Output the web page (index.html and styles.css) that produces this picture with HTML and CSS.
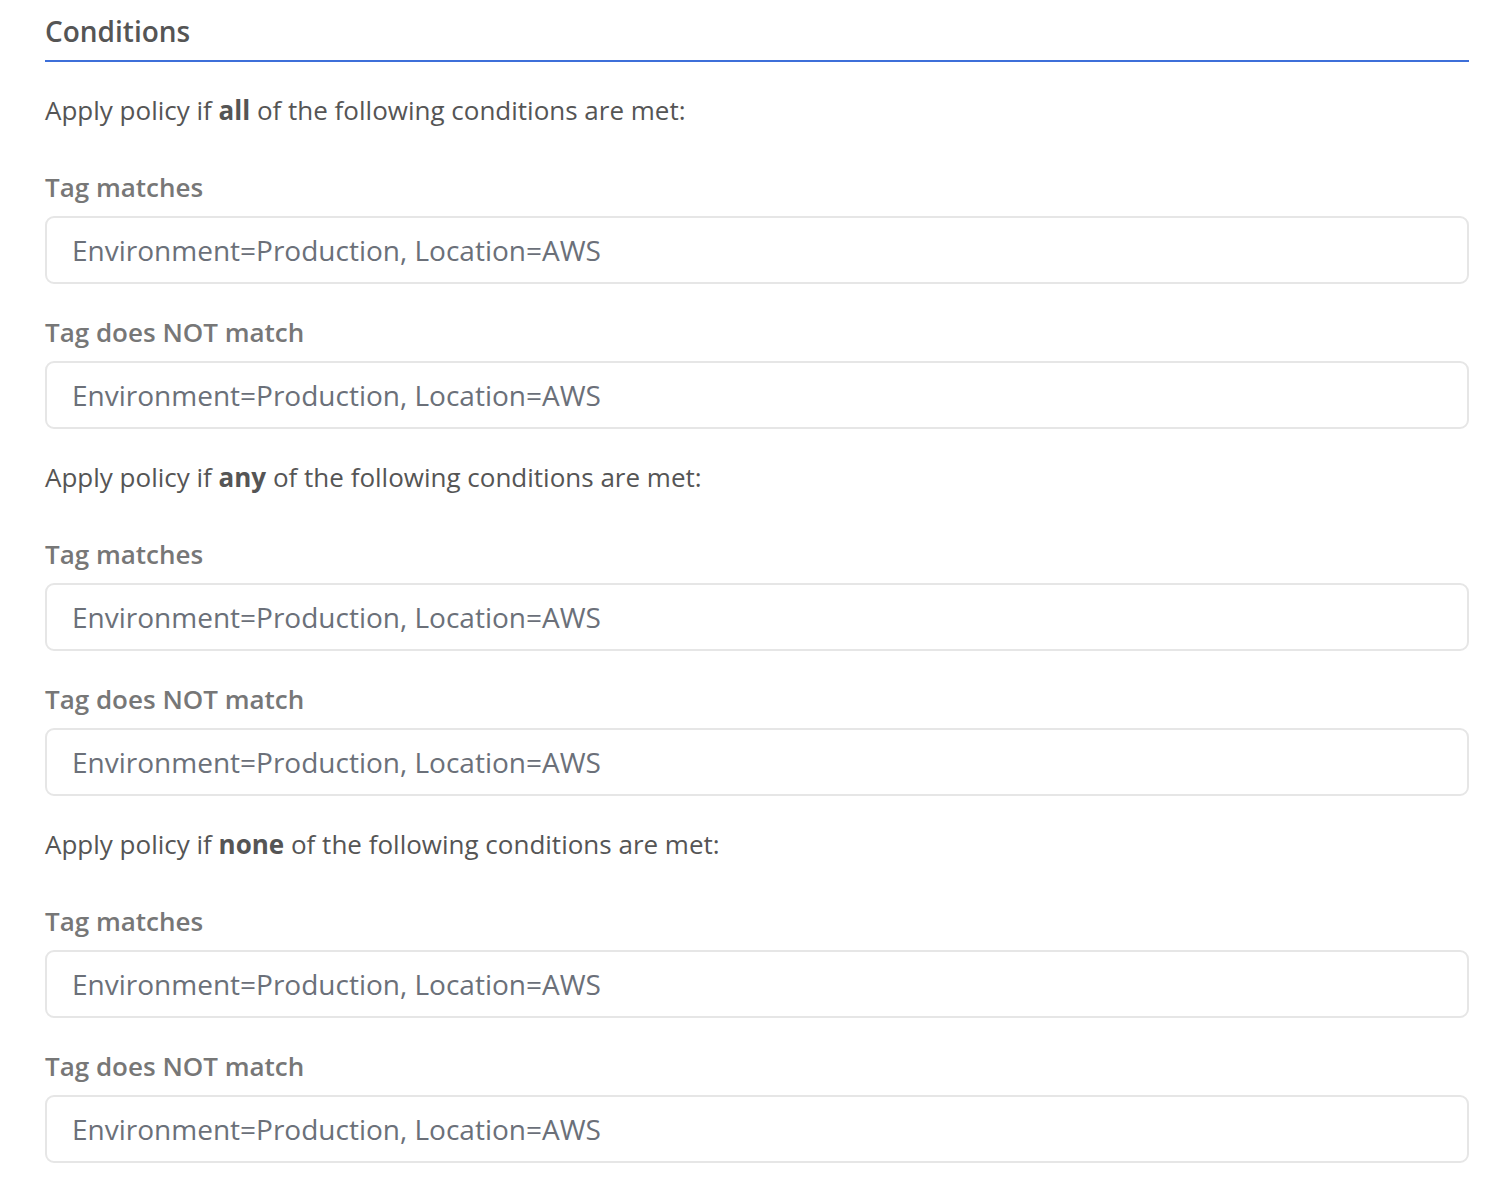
FILE: index.html
```html
<!DOCTYPE html>
<html>
<head>
<meta charset="utf-8">
<link rel="stylesheet" href="styles.css">
</head>
<body>
<div class="panel">
  <h2 class="title">Conditions</h2>
  <div class="section">
    <p class="intro">Apply policy if <b>all</b> of the following conditions are met:</p>
    <div class="field">
      <label class="label">Tag matches</label>
      <input class="input" type="text" placeholder="Environment=Production, Location=AWS">
    </div>
    <div class="field">
      <label class="label">Tag does NOT match</label>
      <input class="input" type="text" placeholder="Environment=Production, Location=AWS">
    </div>
  </div>
  <div class="section">
    <p class="intro">Apply policy if <b>any</b> of the following conditions are met:</p>
    <div class="field">
      <label class="label">Tag matches</label>
      <input class="input" type="text" placeholder="Environment=Production, Location=AWS">
    </div>
    <div class="field">
      <label class="label">Tag does NOT match</label>
      <input class="input" type="text" placeholder="Environment=Production, Location=AWS">
    </div>
  </div>
  <div class="section">
    <p class="intro">Apply policy if <b>none</b> of the following conditions are met:</p>
    <div class="field">
      <label class="label">Tag matches</label>
      <input class="input" type="text" placeholder="Environment=Production, Location=AWS">
    </div>
    <div class="field">
      <label class="label">Tag does NOT match</label>
      <input class="input" type="text" placeholder="Environment=Production, Location=AWS">
    </div>
  </div>
</div>
</body>
</html>
```
FILE: styles.css
```css
html, body {
  margin: 0;
  padding: 0;
  background: #ffffff;
}
body {
  font-family: "Open Sans", "Liberation Sans", sans-serif;
}
.panel {
  width: 1424px;
  margin-left: 45px;
  display: flex;
  flex-direction: column;
}
.title {
  margin: 0;
  font-size: 28px;
  font-weight: 600;
  color: #555555;
  line-height: 36px;
  padding-top: 13px;
  padding-bottom: 11px;
  border-bottom: 2px solid #3d6fd9;
}
.section {
  display: flex;
  flex-direction: column;
}
.intro {
  margin: 0;
  font-size: 26px;
  line-height: 36px;
  color: #555555;
  padding-top: 30px;
}
.intro b {
  font-weight: 700;
}
.field {
  display: flex;
  flex-direction: column;
  margin-top: 30px;
}
.section .intro + .field {
  margin-top: 41px;
}
.label {
  font-size: 26px;
  font-weight: 600;
  color: #777777;
  line-height: 36px;
  margin-bottom: 11px;
}
.input {
  box-sizing: border-box;
  width: 100%;
  height: 68px;
  border: 2px solid #e6e6e6;
  border-radius: 9px;
  padding: 0 25px;
  font-family: "Open Sans", "Liberation Sans", sans-serif;
  font-size: 28px;
  color: #6b7079;
  outline: none;
  background: #ffffff;
}
.input::placeholder {
  color: #6b7079;
  opacity: 1;
}
```
